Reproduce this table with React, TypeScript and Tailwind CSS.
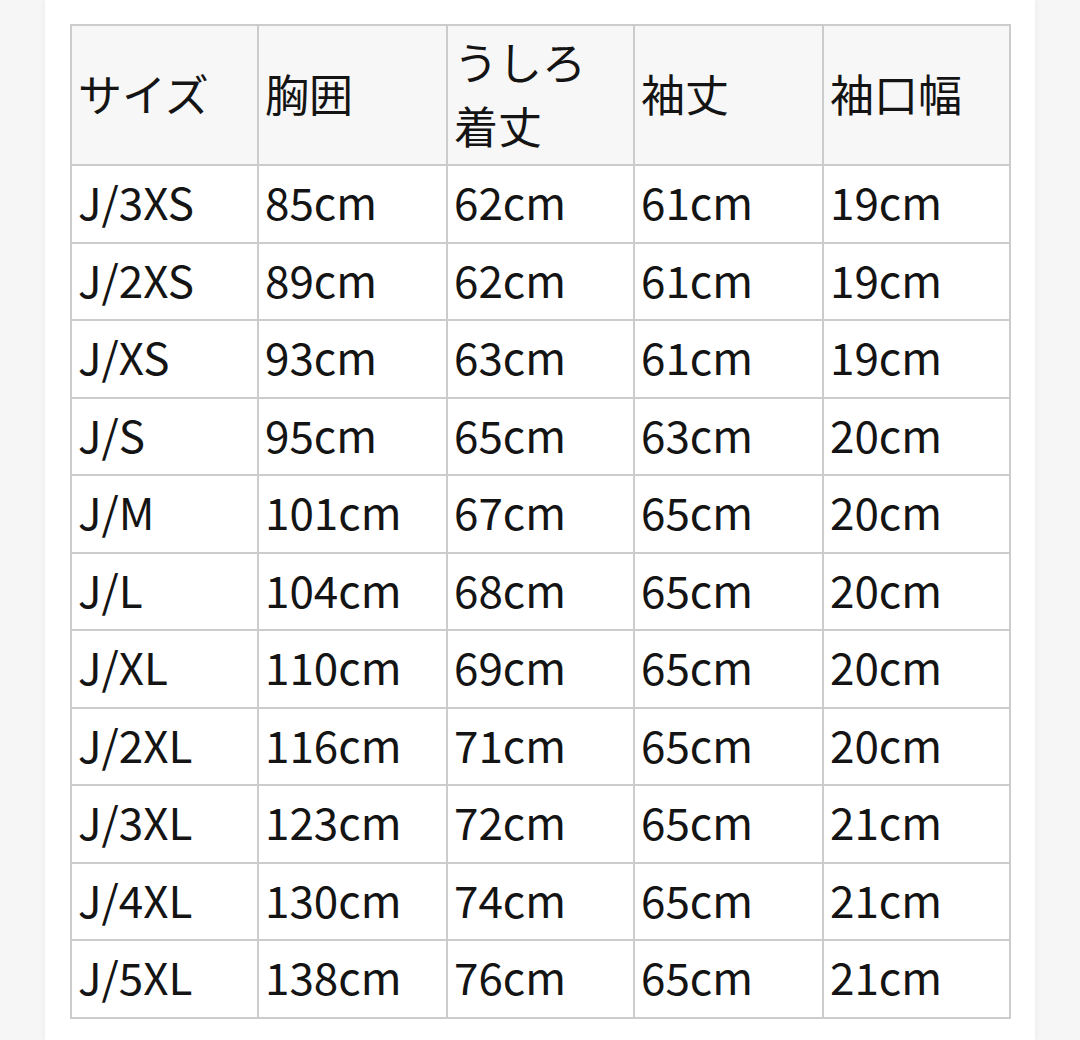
import React from 'react';

const headers = ['サイズ', '胸囲', 'うしろ着丈', '袖丈', '袖口幅'];

const rows: string[][] = [
    ['J/3XS', '85cm', '62cm', '61cm', '19cm'],
    ['J/2XS', '89cm', '62cm', '61cm', '19cm'],
    ['J/XS', '93cm', '63cm', '61cm', '19cm'],
    ['J/S', '95cm', '65cm', '63cm', '20cm'],
    ['J/M', '101cm', '67cm', '65cm', '20cm'],
    ['J/L', '104cm', '68cm', '65cm', '20cm'],
    ['J/XL', '110cm', '69cm', '65cm', '20cm'],
    ['J/2XL', '116cm', '71cm', '65cm', '20cm'],
    ['J/3XL', '123cm', '72cm', '65cm', '21cm'],
    ['J/4XL', '130cm', '74cm', '65cm', '21cm'],
    ['J/5XL', '138cm', '76cm', '65cm', '21cm'],
];

const cell = "border-2 border-[#cccccc] pl-[6px] pr-2 pt-0 pb-[5px] align-middle text-left font-normal";

export default function App() {
    return (
        <div
            className="w-[1080px] h-[1040px] overflow-hidden bg-[#f6f6f6] text-[#141414] text-[44px] leading-[64px]"
            style={{ fontFamily: '"Noto Sans CJK JP", "Noto Sans", sans-serif' }}
        >
            <div className="ml-[45px] w-[990px] h-full bg-white shadow-[0_0_6px_rgba(0,0,0,0.06)] pl-[25px] pt-[24px]">
                <table className="table-fixed border-collapse w-[939px]">
                    <colgroup>
                        <col className="w-[187px]" />
                        <col className="w-[189px]" />
                        <col className="w-[187px]" />
                        <col className="w-[189px]" />
                        <col className="w-[187px]" />
                    </colgroup>
                    <thead>
                        <tr className="bg-[#f7f7f7] h-[140px]">
                            {headers.map(h => (
                                <th key={h} className={cell}>
                                    {h === 'うしろ着丈' ? <>うしろ<br />着丈</> : h}
                                </th>
                            ))}
                        </tr>
                    </thead>
                    <tbody>
                        {rows.map(r => (
                            <tr key={r[0]} className="h-[77.5px]">
                                {r.map((v, i) => (
                                    <td key={i} className={cell}>{v}</td>
                                ))}
                            </tr>
                        ))}
                    </tbody>
                </table>
            </div>
        </div>
    );
}
